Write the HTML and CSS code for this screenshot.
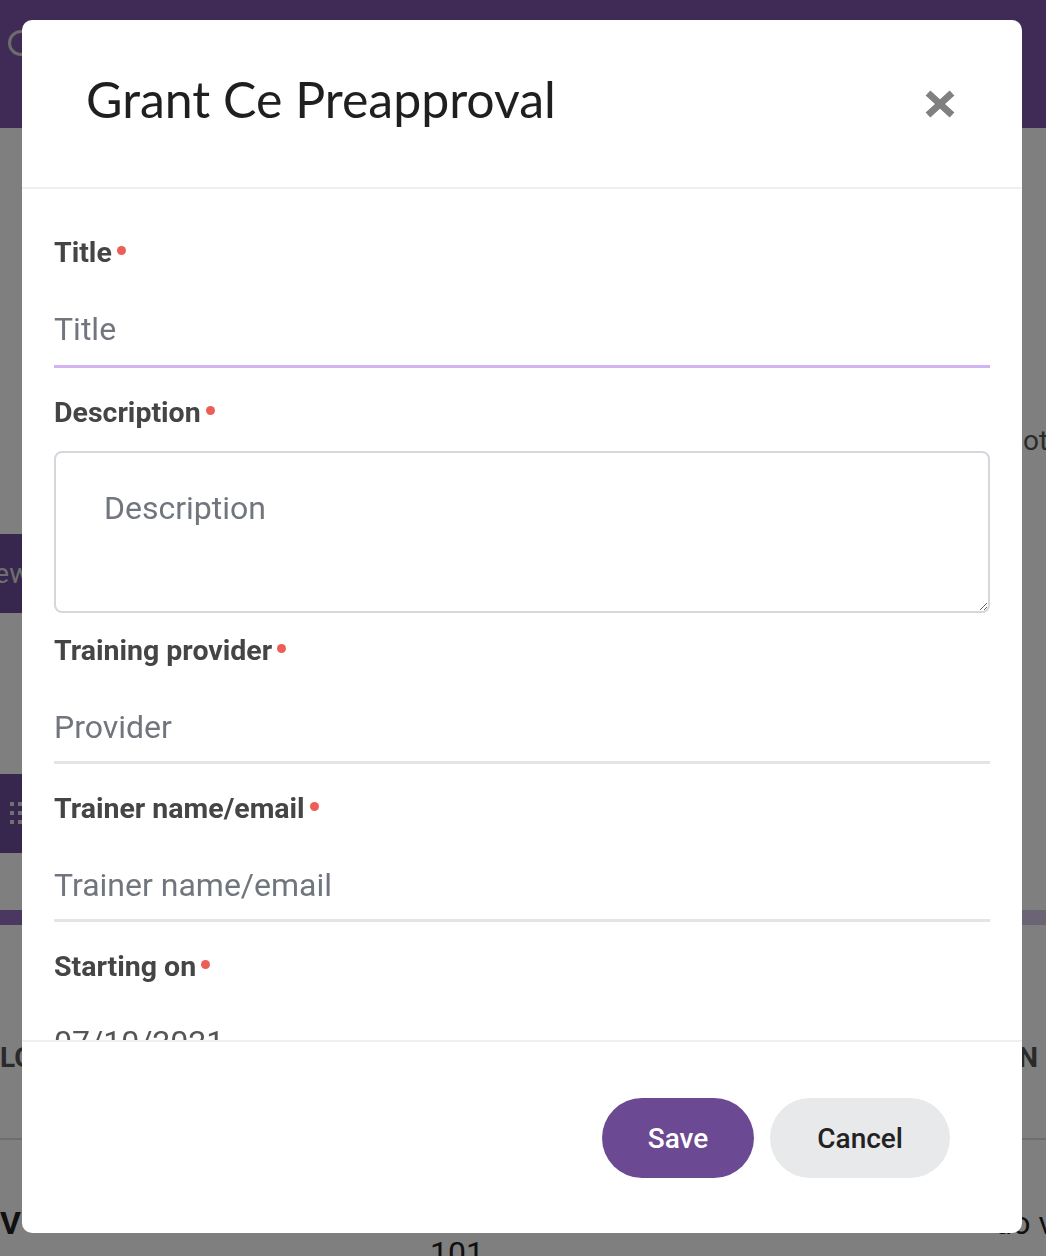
FILE: index.html
```html
<!DOCTYPE html>
<html lang="en">
<head>
  <meta charset="UTF-8" />
  <meta name="viewport" content="width=device-width, initial-scale=1.0" />
  <title>Grant Ce Preapproval</title>
  <link rel="stylesheet" href="styles.css">
</head>
<body>
  <div class="page">
    <div class="topbar"><span class="avatar"></span></div>
    <div class="hero"><span class="hero-text">Notes</span></div>
    <div class="nav-item"><span class="nav-text">Review</span></div>
    <div class="gap-a"></div>
    <div class="nav-item">
      <svg class="dots" width="14" height="24" viewBox="0 0 14 24">
        <rect x="0" y="0" width="4" height="4"/><rect x="8" y="0" width="4" height="4"/>
        <rect x="0" y="9" width="4" height="4"/><rect x="8" y="9" width="4" height="4"/>
        <rect x="0" y="18" width="4" height="4"/><rect x="8" y="18" width="4" height="4"/>
      </svg>
    </div>
    <div class="gap-b"></div>
    <div class="progress"><span class="progress-fill"></span></div>
    <div class="table-head"><span>LO</span><span>N</span></div>
    <div class="table-row"><span class="row-name">V</span><span class="row-num">101</span><span class="row-end">do v</span></div>
  </div>

  <div class="backdrop">
    <div class="modal">
      <div class="modal-header">
        <h1 class="modal-title">Grant Ce Preapproval</h1>
        <button class="close-btn" aria-label="Close">
          <svg width="32" height="30" viewBox="0 0 32 30"><path d="M4 4 L28 26 M28 4 L4 26" stroke="#808080" stroke-width="7" stroke-linecap="butt"/></svg>
        </button>
      </div>

      <div class="modal-body">
        <div class="field">
          <label class="field-label">Title<span class="req"></span></label>
          <input class="field-input focused" type="text" placeholder="Title">
        </div>
        <div class="field area">
          <label class="field-label">Description<span class="req"></span></label>
          <textarea class="field-area" placeholder="Description"></textarea>
        </div>
        <div class="field">
          <label class="field-label">Training provider<span class="req"></span></label>
          <input class="field-input" type="text" placeholder="Provider">
        </div>
        <div class="field">
          <label class="field-label">Trainer name/email<span class="req"></span></label>
          <input class="field-input" type="text" placeholder="Trainer name/email">
        </div>
        <div class="field">
          <label class="field-label">Starting on<span class="req"></span></label>
          <div class="field-value">07/10/2021</div>
        </div>
      </div>

      <div class="modal-footer">
        <button class="btn btn-save">Save</button>
        <button class="btn btn-cancel">Cancel</button>
      </div>
    </div>
  </div>
</body>
</html>
```

FILE: styles.css
```css
* {
  box-sizing: border-box;
}

body {
  margin: 0;
  height: 1256px;
  overflow: hidden;
  font-family: Roboto, "Liberation Sans", sans-serif;
  background: #ffffff;
}

/* page behind the modal */
.page {
  display: flex;
  flex-direction: column;
}

.topbar {
  height: 128px;
  background: #7e56ac;
  padding: 30px 0 0 8px;
}

.avatar {
  display: block;
  width: 26px;
  height: 26px;
  border-radius: 50%;
  border: 3px solid #d8d8d8;
}

.hero {
  height: 406px;
  display: flex;
  align-items: flex-start;
  padding: 296px 0 0 1003px;
  white-space: nowrap;
}

.hero-text {
  font-size: 28px;
  color: #555;
}

.nav-item {
  height: 79px;
  width: 220px;
  background: #6f4c9b;
  display: flex;
  align-items: center;
}

.nav-text {
  font-size: 28px;
  color: #ddd;
  margin-left: -58px;
}

.dots {
  fill: #e0e0e0;
  margin-left: 10px;
}

.gap-a {
  height: 161px;
}

.gap-b {
  height: 57px;
}

.progress {
  height: 15px;
  background: #d6c8ea;
  display: flex;
}

.progress-fill {
  width: 60%;
  background: #9470c0;
}

.table-head {
  height: 215px;
  display: flex;
  justify-content: space-between;
  align-items: flex-start;
  padding: 116px 8px 0 0;
  border-bottom: 2px solid #dcdcdc;
  font-size: 28px;
  font-weight: 700;
  color: #555;
}

.table-row {
  display: flex;
  align-items: flex-start;
  padding-top: 64px;
  font-size: 32px;
  color: #222;
}

.row-name {
  font-weight: 700;
  width: 430px;
}

.row-num {
  padding-top: 30px;
  flex: 1;
}

.row-end {
  margin-right: -8px;
}

/* modal */
.backdrop {
  position: fixed;
  inset: 0;
  background: rgba(0, 0, 0, 0.5);
  padding: 20px 24px 23px 22px;
}

.modal {
  width: 1000px;
  height: 1213px;
  background: #fff;
  border-radius: 10px;
  display: flex;
  flex-direction: column;
  overflow: hidden;
}

.modal-header {
  height: 169px;
  flex-shrink: 0;
  border-bottom: 2px solid #f0f0f0;
  display: flex;
  justify-content: space-between;
  align-items: flex-start;
  padding: 49px 66px 0 64px;
}

.modal-title {
  margin: 0;
  font-family: Lato, "Open Sans", sans-serif;
  font-weight: 400;
  font-size: 50px;
  line-height: 60px;
  color: #1f1f1f;
}

.close-btn {
  background: none;
  border: none;
  padding: 0;
  margin-top: 20px;
  cursor: pointer;
}

.modal-body {
  flex: 1;
  overflow: hidden;
  padding: 46px 32px 0 32px;
}

.field {
  margin-bottom: 27px;
}

.field.area {
  margin-bottom: 20px;
}

.field-label {
  display: flex;
  align-items: center;
  font-size: 28.5px;
  line-height: 36px;
  font-weight: 700;
  color: #454545;
  margin-bottom: 20px;
}

.req {
  width: 9px;
  height: 9px;
  border-radius: 50%;
  background: #ec5f57;
  margin: -6px 0 0 5px;
}

.field-input {
  display: block;
  width: 100%;
  border: none;
  border-bottom: 3px solid #e4e4e4;
  padding: 20px 0 16px 0;
  font-family: Roboto, sans-serif;
  font-size: 32px;
  line-height: 36px;
  color: #333;
  outline: none;
  background: transparent;
}

.field-input.focused {
  border-bottom-color: #d3b4f2;
  padding-bottom: 18px;
}

.field-input::placeholder,
.field-area::placeholder {
  color: #71767e;
}

.field-area {
  display: block;
  width: 100%;
  height: 162px;
  border: 2px solid #d4d7dc;
  border-radius: 8px;
  padding: 37px 48px;
  font-family: Roboto, sans-serif;
  font-size: 32px;
  line-height: 36px;
  color: #333;
  outline: none;
  resize: vertical;
}

.field-value {
  padding-top: 19px;
  font-size: 32px;
  line-height: 36px;
  color: #555;
}

.modal-footer {
  height: 193px;
  flex-shrink: 0;
  border-top: 2px solid #f0f0f0;
  display: flex;
  justify-content: flex-end;
  align-items: flex-start;
  gap: 16px;
  padding: 56px 72px 0 0;
}

.btn {
  height: 80px;
  border: none;
  border-radius: 40px;
  padding: 0 46px;
  font-family: Roboto, sans-serif;
  font-size: 28px;
  font-weight: 500;
  cursor: pointer;
}

.btn-save {
  background: #6b4993;
  color: #fff;
}

.btn-cancel {
  background: #e8e9eb;
  color: #222;
  padding: 0 47px;
}
```
